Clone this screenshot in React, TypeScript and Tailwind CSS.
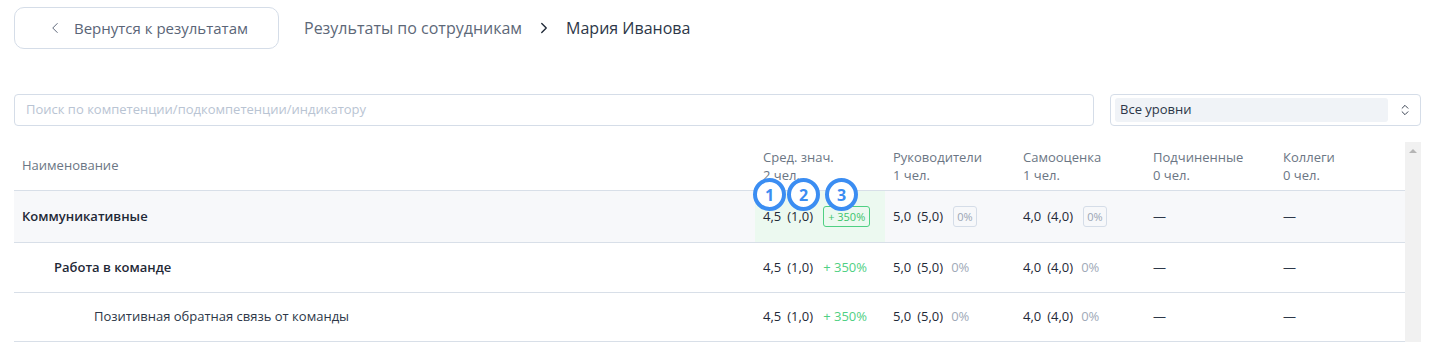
import { ChevronLeft, ChevronRight, ChevronsUpDown } from "lucide-react";

type Cell = { value: string; base: string; diff: string; tone: "green" | "gray" } | null;

const columns = [
  { title: "Сред. знач.", count: "2 чел." },
  { title: "Руководители", count: "1 чел." },
  { title: "Самооценка", count: "1 чел." },
  { title: "Подчиненные", count: "0 чел." },
  { title: "Коллеги", count: "0 чел." },
];

const cells: Cell[] = [
  { value: "4,5", base: "(1,0)", diff: "+ 350%", tone: "green" },
  { value: "5,0", base: "(5,0)", diff: "0%", tone: "gray" },
  { value: "4,0", base: "(4,0)", diff: "0%", tone: "gray" },
  null,
  null,
];

const rows = [
  { name: "Коммуникативные", level: 0 },
  { name: "Работа в команде", level: 1 },
  { name: "Позитивная обратная связь от команды", level: 2 },
];

function Marker({ n }: { n: number }) {
  return (
    <div className="flex h-[33px] w-[33px] shrink-0 items-center justify-center rounded-full border-[4px] border-[#3b8df2] bg-white text-[16px] font-bold leading-none text-[#3b8df2]">
      {n}
    </div>
  );
}

function ValueCell({ cell, boxed }: { cell: Cell; boxed: boolean }) {
  if (!cell) return <span className="text-[#2d3748]">—</span>;
  const green = cell.tone === "green";
  return (
    <div className="flex items-center">
      <span className="text-[#1f2937]">{cell.value}</span>
      <span className="ml-[6px] text-[#1f2937]">{cell.base}</span>
      {boxed ? (
        <span
          className={
            green
              ? "ml-[10px] rounded-[3px] border border-[#4fd083] px-[4px] text-[11px] leading-[19px] text-[#3cc46c]"
              : "ml-[10px] rounded-[3px] border border-[#d5dde8] px-[3px] text-[11px] leading-[19px] text-[#9aa5b4]"
          }
        >
          {cell.diff}
        </span>
      ) : (
        <span className={green ? "ml-[10px] text-[#4fd083]" : "ml-[8px] text-[#a0aab8]"}>{cell.diff}</span>
      )}
    </div>
  );
}

export default function App() {
  return (
    <div
      className="w-[1430px] h-[342px] overflow-hidden bg-white pl-[14px] pr-[9px] pt-[7px]"
      style={{ fontFamily: "'Open Sans', 'Noto Sans', sans-serif" }}
    >
      <div className="flex items-center">
        <button className="flex h-[42px] w-[265px] items-center rounded-[10px] border border-[#d5dde8] pl-[31px] text-[15px] text-[#5a6577]">
          <ChevronLeft size={18} strokeWidth={1.3} className="mr-[10px]" />
          Вернутся к результатам
        </button>
        <div className="ml-[25px] flex items-center text-[16px]">
          <span className="text-[#5d6878]">Результаты по сотрудникам</span>
          <ChevronRight size={18} strokeWidth={1.8} className="ml-[13px] mr-[13px] text-[#1f2937]" />
          <span className="text-[#2d3748]">Мария Иванова</span>
        </div>
      </div>

      <div className="mt-[45px] flex items-center gap-[16px]">
        <div className="flex h-[32px] w-[1080px] items-center rounded-[4px] border border-[#d5dde8] pl-[11px] text-[13px] text-[#b9c4d3]">
          Поиск по компетенции/подкомпетенции/индикатору
        </div>
        <div className="flex h-[32px] w-[311px] items-center rounded-[4px] border border-[#d5dde8] pl-[4px]">
          <div className="flex h-[24px] w-[273px] items-center rounded-[3px] bg-[#f0f3f7] pl-[5px] text-[13px] font-medium text-[#2d3748]">
            Все уровни
          </div>
          <ChevronsUpDown size={14} strokeWidth={1.6} className="ml-[10px] text-[#2d3748]" />
        </div>
      </div>

      <div className="mt-[16px] flex">
        <div className="w-[1391px] text-[13px]">
          <div className="flex h-[49px] border-b border-[#d8dfe8] text-[#6b7684]">
            <div className="flex flex-1 items-center pl-[8px]">Наименование</div>
            {columns.map((c) => (
              <div key={c.title} className="flex w-[130px] flex-col justify-center pl-[8px] leading-[18px]">
                <span>{c.title}</span>
                <span>{c.count}</span>
              </div>
            ))}
          </div>

          {rows.map((r, i) => (
            <div
              key={r.name}
              className={
                i === 0
                  ? "flex h-[52px] border-b border-[#d8dfe8] bg-[#f7f8fa]"
                  : i === 1
                    ? "flex h-[50px] border-b border-[#d8dfe8]"
                    : "flex h-[49px] border-b border-[#d8dfe8]"
              }
            >
              <div
                className={
                  r.level === 0
                    ? "flex flex-1 items-center pl-[8px] font-semibold text-[#1f2937]"
                    : r.level === 1
                      ? "flex flex-1 items-center pl-[40px] font-semibold text-[#1f2937]"
                      : "flex flex-1 items-center pl-[80px] text-[#2d3748]"
                }
              >
                {r.name}
              </div>
              {cells.map((c, j) => (
                <div
                  key={j}
                  className={
                    i === 0 && j === 0
                      ? "relative flex w-[130px] items-center bg-[#ecf9f0] pl-[8px]"
                      : "flex w-[130px] items-center pl-[8px]"
                  }
                >
                  <ValueCell cell={c} boxed={i === 0} />
                  {i === 0 && j === 0 && (
                    <div className="absolute left-[-2px] top-[-13px] flex w-[110px] items-center">
                      <Marker n={1} />
                      <div className="ml-[1px]">
                        <Marker n={2} />
                      </div>
                      <div className="ml-[5px]">
                        <Marker n={3} />
                      </div>
                    </div>
                  )}
                </div>
              ))}
            </div>
          ))}
        </div>
        <div className="flex w-[16px] justify-center bg-[#f1f1f1] pt-[7px]">
          <div className="h-0 w-0 border-x-[4px] border-b-[4px] border-x-transparent border-b-[#b5b5b5]" />
        </div>
      </div>
    </div>
  );
}
